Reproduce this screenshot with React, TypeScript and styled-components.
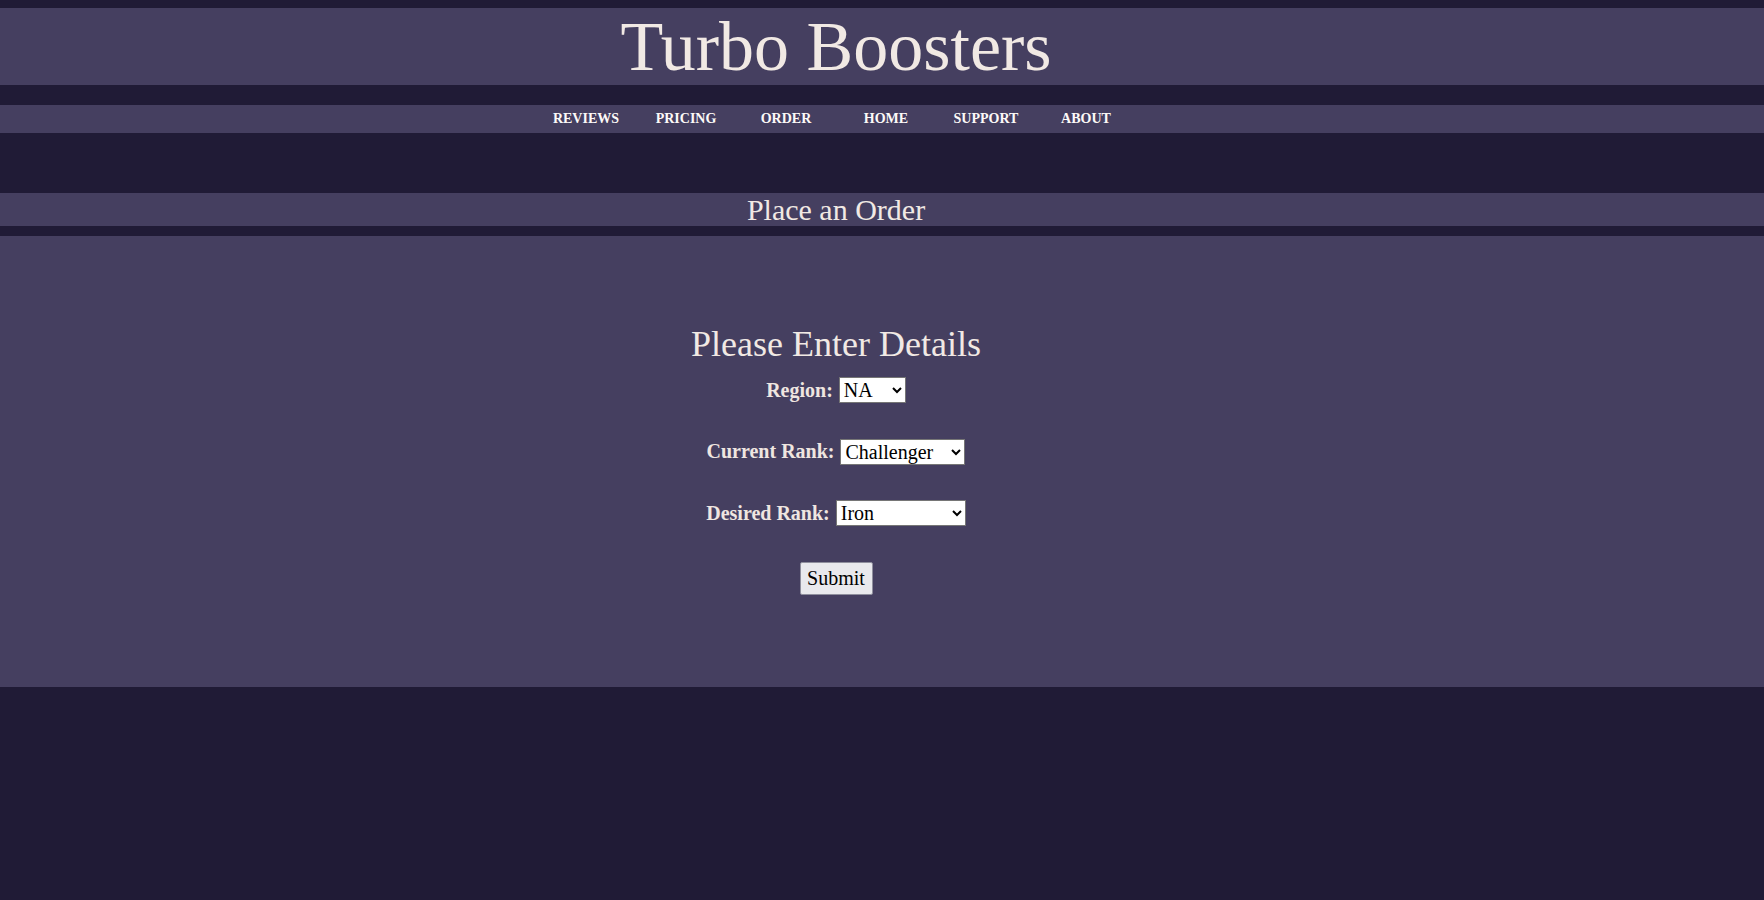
import React from "react";
import styled, { createGlobalStyle } from "styled-components";

const GlobalStyle = createGlobalStyle`
  html, body {
    margin: 0;
    padding: 0;
    background: #201b36;
  }
  body {
    font-family: "Liberation Serif", "Times New Roman", serif;
  }
`;

const Page = styled.div`
  min-height: 100vh;
  padding-top: 8px;
  box-sizing: border-box;
  background: #201b36;
`;

const Band = styled.div<{ $h: number; $mt?: number }>`
  background: #453f60;
  height: ${(p) => p.$h}px;
  margin-top: ${(p) => p.$mt ?? 0}px;
  padding-right: 92px;
  display: flex;
  justify-content: center;
  align-items: stretch;
`;

const Title = styled.h1`
  margin: 0;
  font-weight: normal;
  font-size: 70px;
  line-height: 77px;
  color: #f1e9e4;
`;

const Nav = styled.nav`
  display: flex;
`;

const NavLink = styled.a`
  display: block;
  width: 100px;
  text-align: center;
  font-size: 14px;
  font-weight: bold;
  line-height: 27px;
  color: #fdfaf8;
  text-decoration: none;
  text-transform: uppercase;
`;

const SectionTitle = styled.h2`
  margin: 0;
  font-weight: normal;
  font-size: 30px;
  line-height: 33px;
  color: #f1e9e4;
`;

const Panel = styled.section`
  background: #453f60;
  margin-top: 10px;
  padding: 88px 92px 92px 0;
  display: flex;
  flex-direction: column;
  align-items: center;
`;

const FormTitle = styled.h3`
  margin: 0;
  font-weight: normal;
  font-size: 36px;
  line-height: 41px;
  color: #f1e9e4;
`;

const Form = styled.form`
  margin-top: 12px;
  display: flex;
  flex-direction: column;
  align-items: center;
  gap: 35.5px;
`;

const Row = styled.div`
  display: flex;
  align-items: center;
  gap: 6px;
  height: 26px;
`;

const Label = styled.label`
  font-size: 20px;
  font-weight: bold;
  line-height: 23px;
  color: #efe6e0;
`;

const Select = styled.select<{ $w: number }>`
  width: ${(p) => p.$w}px;
  height: 26px;
  box-sizing: border-box;
  font-family: "Liberation Serif", "Times New Roman", serif;
  font-size: 20px;
  color: #000;
  background: #fff;
  border: 1px solid #767676;
  border-radius: 0;
  padding: 0;
`;

const Submit = styled.button`
  height: 33px;
  width: 73px;
  box-sizing: border-box;
  font-family: "Liberation Serif", "Times New Roman", serif;
  font-size: 20px;
  color: #000;
  background: #e9e9ed;
  border: 1px solid #8f8f9d;
  border-radius: 2px;
  padding: 0 6px;
`;

const ranks = [
  "Iron",
  "Bronze",
  "Silver",
  "Gold",
  "Platinum",
  "Diamond",
  "Master",
  "Grandmaster",
  "Challenger",
];

export default function App() {
  return (
    <>
      <GlobalStyle />
      <Page>
        <Band $h={77}>
          <Title>Turbo Boosters</Title>
        </Band>
        <Band $h={28} $mt={20}>
          <Nav>
            {["Reviews", "Pricing", "Order", "Home", "Support", "About"].map((n) => (
              <NavLink key={n} href="#">
                {n}
              </NavLink>
            ))}
          </Nav>
        </Band>
        <Band $h={33} $mt={60}>
          <SectionTitle>Place an Order</SectionTitle>
        </Band>
        <Panel>
          <FormTitle>Please Enter Details</FormTitle>
          <Form onSubmit={(e) => e.preventDefault()}>
            <Row>
              <Label htmlFor="region">Region:</Label>
              <Select id="region" $w={67} defaultValue="NA">
                <option>NA</option>
                <option>EUW</option>
                <option>EUNE</option>
                <option>KR</option>
                <option>OCE</option>
              </Select>
            </Row>
            <Row>
              <Label htmlFor="current">Current Rank:</Label>
              <Select id="current" $w={125} defaultValue="Challenger">
                {ranks.map((r) => (
                  <option key={r}>{r}</option>
                ))}
              </Select>
            </Row>
            <Row>
              <Label htmlFor="desired">Desired Rank:</Label>
              <Select id="desired" $w={130} defaultValue="Iron">
                {ranks.map((r) => (
                  <option key={r}>{r}</option>
                ))}
              </Select>
            </Row>
            <Submit type="submit">Submit</Submit>
          </Form>
        </Panel>
      </Page>
    </>
  );
}
